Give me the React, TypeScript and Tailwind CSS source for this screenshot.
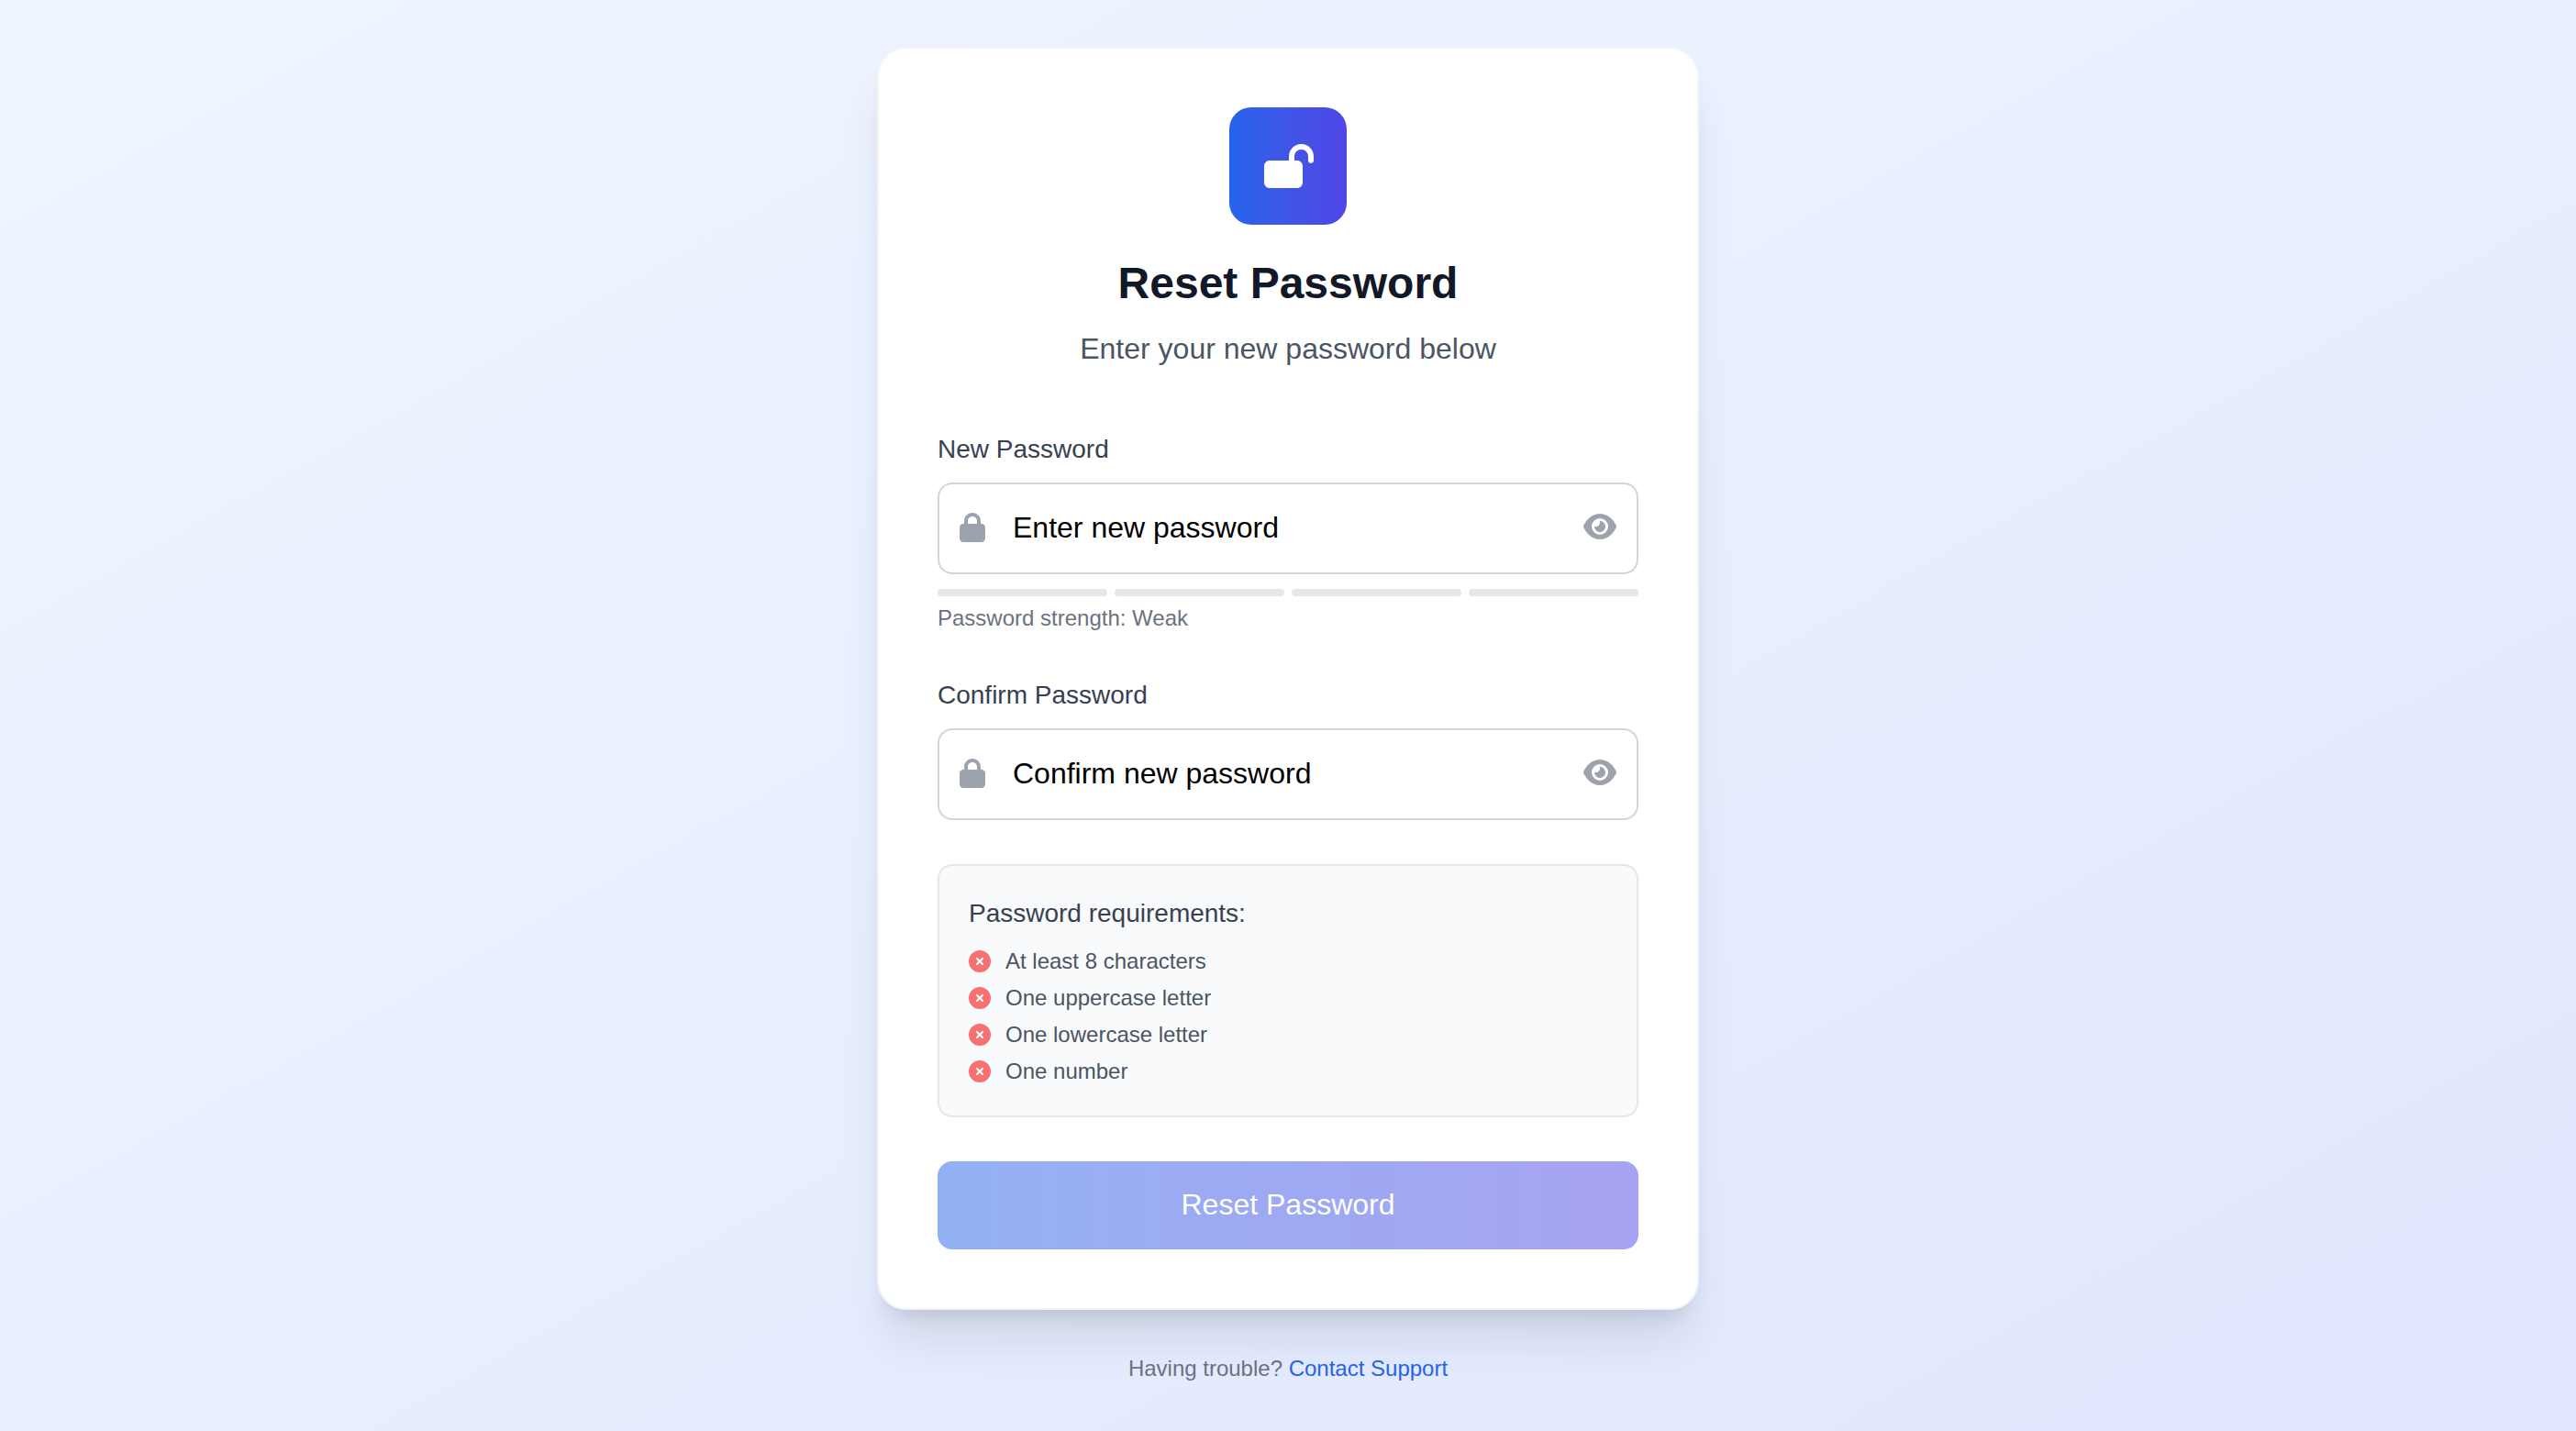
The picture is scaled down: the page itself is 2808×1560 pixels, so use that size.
import { FaLockOpen, FaLock, FaEye, FaCircleXmark } from "react-icons/fa6";

function PasswordField({ label, placeholder }: { label: string; placeholder: string }) {
  return (
    <div>
      <div className="text-[28px] leading-[40px] text-[#374151] mb-[16px]">{label}</div>
      <div className="h-[100px] flex items-center rounded-[16px] border-2 border-[#d1d5db] bg-white pl-[22px] pr-[22px]">
        <FaLock className="w-[28px] h-[32px] text-[#9ca3af] shrink-0 -mt-[3px]" />
        <span className="ml-[30px] flex-1 text-[32px] text-black -mt-[2px]">{placeholder}</span>
        <FaEye className="w-[36px] h-[32px] text-[#9ca3af] shrink-0 -mt-[4px]" />
      </div>
    </div>
  );
}

export default function App() {
  const reqs = ["At least 8 characters", "One uppercase letter", "One lowercase letter", "One number"];
  return (
    <div className="min-h-screen pb-[1px] flex flex-col items-center justify-center bg-gradient-to-br from-[#eff6ff] to-[#e0e7ff] font-['Liberation_Sans',Arial,sans-serif]">
      <div className="w-[896px] rounded-[32px] border-2 border-[#f3f4f6] bg-white p-[64px] shadow-[0_40px_50px_-10px_rgba(0,0,0,0.1),0_16px_20px_-12px_rgba(0,0,0,0.1)]">
        <div className="flex flex-col items-center">
          <div className="w-[128px] h-[128px] rounded-[24px] bg-gradient-to-r from-[#2563eb] to-[#4f46e5] flex items-center justify-center">
            <FaLockOpen className="w-[54px] h-[48px] text-white ml-[2px]" />
          </div>
          <h1 className="mt-[28px] text-[48px] leading-[72px] font-bold text-[#111827]">Reset Password</h1>
          <p className="mt-[11px] text-[32px] leading-[48px] text-[#4b5563]">Enter your new password below</p>
        </div>
        <div className="mt-[66px]">
          <PasswordField label="New Password" placeholder="Enter new password" />
          <div className="mt-[16px] flex gap-[8px]">
            <div className="flex-1 h-[8px] rounded-full bg-[#e5e7eb]" />
            <div className="flex-1 h-[8px] rounded-full bg-[#e5e7eb]" />
            <div className="flex-1 h-[8px] rounded-full bg-[#e5e7eb]" />
            <div className="flex-1 h-[8px] rounded-full bg-[#e5e7eb]" />
          </div>
          <div className="mt-[8px] text-[24px] leading-[32px] text-[#6b7280]">Password strength: Weak</div>
        </div>
        <div className="mt-[48px]">
          <PasswordField label="Confirm Password" placeholder="Confirm new password" />
        </div>
        <div className="mt-[48px] rounded-[16px] border-2 border-[#e5e7eb] bg-[#f9fafb] p-[32px]">
          <div className="text-[28px] leading-[40px] text-[#374151] mb-[16px]">Password requirements:</div>
          <ul className="flex flex-col gap-[8px]">
            {reqs.map((r) => (
              <li key={r} className="flex items-center gap-[16px] text-[24px] leading-[32px] text-[#4b5563]">
                <FaCircleXmark className="text-[24px] text-[#f87171] shrink-0" />
                <span>{r}</span>
              </li>
            ))}
          </ul>
        </div>
        <button className="mt-[48px] w-full h-[96px] pb-[2px] rounded-[16px] bg-gradient-to-r from-[#2563eb] to-[#4f46e5] opacity-50 text-white text-[32px]">
          Reset Password
        </button>
      </div>
      <p className="mt-[48px] text-[24px] leading-[32px] text-[#6b7280]">
        Having trouble? <a className="text-[#2563eb]">Contact Support</a>
      </p>
    </div>
  );
}
